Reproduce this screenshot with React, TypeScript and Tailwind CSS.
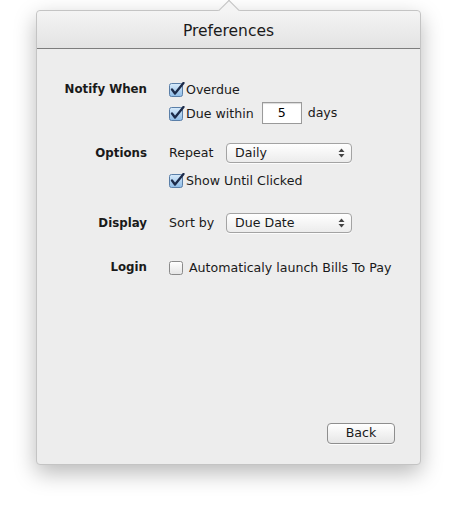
import type { ReactNode } from "react";

const font = { fontFamily: '"DejaVu Sans", "Liberation Sans", sans-serif' };

function CheckBox({ checked }: { checked: boolean }) {
  return (
    <svg width="16" height="15" viewBox="0 0 16 15" className="shrink-0">
      <defs>
        <linearGradient id={checked ? "cbOn" : "cbOff"} x1="0" y1="0" x2="0" y2="1">
          <stop offset="0" stopColor={checked ? "#d8ebfb" : "#ffffff"} />
          <stop offset="1" stopColor={checked ? "#8dbbe6" : "#e4e4e4"} />
        </linearGradient>
      </defs>
      <rect
        x="0.5"
        y="1.5"
        width="13"
        height="13"
        rx="2"
        fill={`url(#${checked ? "cbOn" : "cbOff"})`}
        stroke={checked ? "#5a7fa8" : "#8a8a8a"}
      />
      {checked && (
        <path
          d="M3 7.5 L6 11.5 L14.5 1"
          fill="none"
          stroke="#1c2b4a"
          strokeWidth="2.3"
          strokeLinecap="round"
          strokeLinejoin="round"
        />
      )}
    </svg>
  );
}

function Check({ checked, children }: { checked: boolean; children: ReactNode }) {
  return (
    <div className="flex items-center gap-[1px] text-[12.6px] leading-[19px] text-[#1a1a1a]">
      <CheckBox checked={checked} />
      <span className={checked ? "" : "ml-[3px]"}>{children}</span>
    </div>
  );
}

function Select({ value }: { value: string }) {
  return (
    <div className="flex h-[20px] w-[126px] items-center justify-between rounded-[4px] border border-[#a3a3a3] bg-gradient-to-b from-[#ffffff] to-[#ececec] pl-[8px] pr-[6px] text-[12.6px] text-[#1a1a1a] shadow-[0_1px_0_rgba(255,255,255,0.8)]">
      <span>{value}</span>
      <svg width="7" height="10" viewBox="0 0 7 10">
        <path d="M3.5 0.5 L6.5 4 H0.5 Z" fill="#444" />
        <path d="M3.5 9.5 L6.5 6 H0.5 Z" fill="#444" />
      </svg>
    </div>
  );
}

function Row({ label, children, className }: { label?: string; children: ReactNode; className?: string }) {
  return (
    <div className={`flex items-center ${className ?? ""}`}>
      <div className="w-[110px] shrink-0 text-right text-[11.8px] leading-[19px] font-bold text-[#1a1a1a]">{label}</div>
      <div className="ml-[22px] flex items-center">{children}</div>
    </div>
  );
}

export default function App() {
  return (
    <div className="h-[506px] w-[457px] bg-white pt-[10px]" style={font}>
      <div className="relative ml-[36px] flex h-[455px] w-[385px] flex-col rounded-[4px] border border-[#c4c4c4] bg-[#ededed] shadow-[0_8px_22px_rgba(0,0,0,0.28)]">
        <div className="absolute left-[184px] top-[-8px] h-[16px] w-[16px] rotate-45 border-l border-t border-[#c4c4c4] bg-[#f4f4f4]" />
        <div className="relative flex h-[38px] items-center justify-center rounded-t-[4px] border-b border-[#7d7d7d] bg-gradient-to-b from-[#f4f4f4] to-[#e3e3e3] pt-[4px]">
          <span className="text-[15.5px] text-[#1a1a1a]">Preferences</span>
        </div>

        <div className="flex flex-1 flex-col">
          <Row label="Notify When" className="mt-[31px]">
            <Check checked>Overdue</Check>
          </Row>
          <Row className="mt-[3px]">
            <Check checked>Due within</Check>
            <div className="ml-[8px] flex h-[22px] w-[40px] items-center justify-center border border-[#9a9a9a] bg-white text-[12.6px] shadow-[inset_0_1px_1px_rgba(0,0,0,0.15)]">
              5
            </div>
            <span className="ml-[6px] text-[12.6px] text-[#1a1a1a]">days</span>
          </Row>
          <Row label="Options" className="mt-[19px]">
            <span className="w-[57px] text-[12.6px] text-[#1a1a1a]">Repeat</span>
            <Select value="Daily" />
          </Row>
          <Row className="mt-[8px]">
            <Check checked>Show Until Clicked</Check>
          </Row>
          <Row label="Display" className="mt-[23px]">
            <span className="w-[57px] text-[12.6px] text-[#1a1a1a]">Sort by</span>
            <Select value="Due Date" />
          </Row>
          <Row label="Login" className="mt-[25px]">
            <Check checked={false}>Automaticaly launch Bills To Pay</Check>
          </Row>

          <div className="mt-auto mb-[20px] mr-[25px] flex justify-end">
            <button className="h-[21px] w-[68px] rounded-[4px] border border-[#8e8e8e] bg-gradient-to-b from-[#ffffff] to-[#e6e6e6] text-[12.6px] text-[#1a1a1a] shadow-[0_1px_0_rgba(255,255,255,0.8)]">
              Back
            </button>
          </div>
        </div>
      </div>
    </div>
  );
}
